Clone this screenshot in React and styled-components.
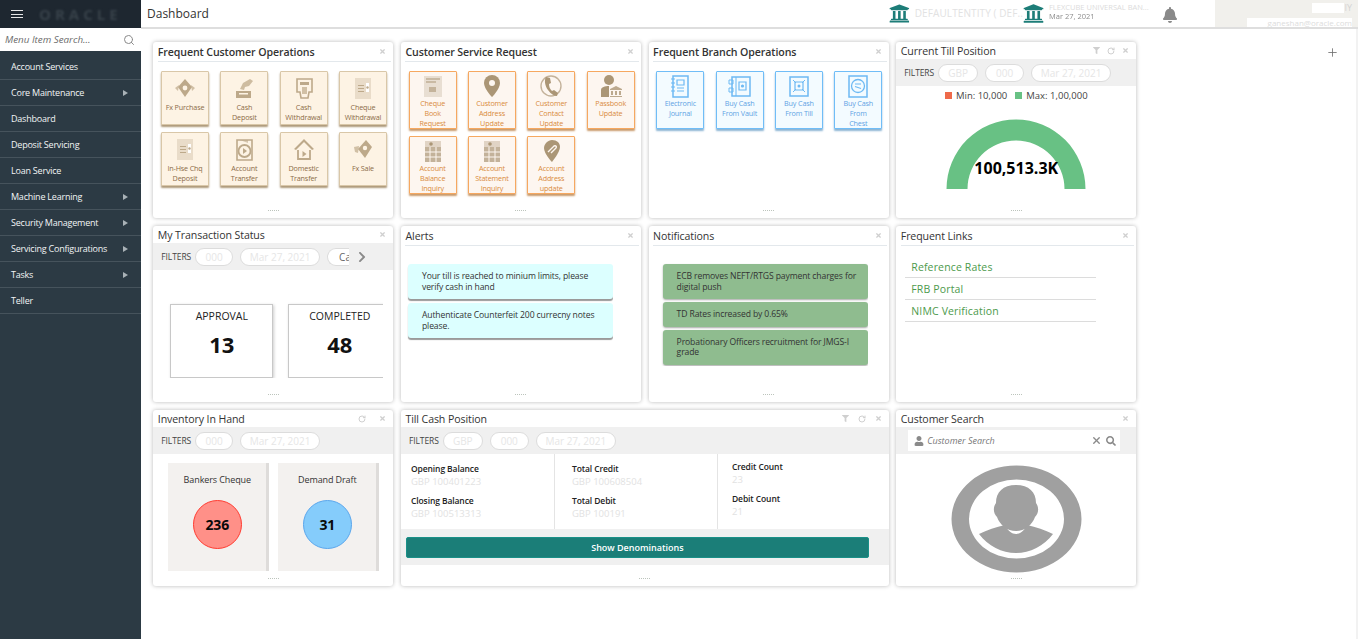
import React from "react";
import styled, { createGlobalStyle } from "styled-components";
import { FaBell, FaChevronRight, FaFilter, FaSearch, FaTimes, FaUniversity, FaUser } from "react-icons/fa";
import { RotateCw, Plus, Search, X } from "lucide-react";

const GlobalStyle = createGlobalStyle`
  html, body { margin: 0; padding: 0; height: 100%; background: #fff; }
  body { font-family: "Open Sans", "Noto Sans", sans-serif; color: #2b2b2b; overflow: hidden; }
  * { box-sizing: border-box; }
`;

const Page = styled.div`
  display: flex;
  width: 1358px;
  height: 639px;
  overflow: hidden;
`;

const Sidebar = styled.aside`
  width: 141px;
  flex: none;
  background: #2c3a44;
  display: flex;
  flex-direction: column;
`;

const Brand = styled.div`
  height: 28px;
  background: #1e2730;
  display: flex;
  align-items: center;
  padding-left: 11px;
  gap: 16px;
`;

const Burger = styled.span`
  width: 12px;
  height: 8px;
  border-top: 1px solid #e6e6e6;
  border-bottom: 1px solid #e6e6e6;
  position: relative;
  &::after {
    content: "";
    position: absolute;
    left: 0;
    right: 0;
    top: 2.5px;
    height: 1px;
    background: #e6e6e6;
  }
`;

const Logo = styled.span`
  font-size: 15px;
  font-weight: 700;
  letter-spacing: 4px;
  color: #38424a;
  filter: blur(0.8px);
`;

const MenuSearch = styled.div`
  height: 23px;
  background: #fff;
  display: flex;
  align-items: center;
  justify-content: space-between;
  padding: 0 6px 0 5px;
  font-size: 9.8px;
  font-style: italic;
  color: #6b6b6b;
`;

const Menu = styled.nav`
  display: flex;
  flex-direction: column;
  padding-top: 2px;
`;

const MenuItem = styled.div`
  height: 26px;
  display: flex;
  align-items: center;
  justify-content: space-between;
  padding: 0 13px 0 11px;
  border-bottom: 1px solid #46535c;
  font-size: 9px;
  letter-spacing: -0.22px;
  color: #f2f4f5;
  &:first-child { height: 27px; }
`;

const Arrow = styled.span`
  width: 0;
  height: 0;
  border-left: 5px solid #a9b1b6;
  border-top: 3.5px solid transparent;
  border-bottom: 3.5px solid transparent;
`;

const Content = styled.main`
  flex: 1;
  min-width: 0;
  display: flex;
  flex-direction: column;
`;

const Header = styled.header`
  height: 29px;
  flex: none;
  display: flex;
  align-items: stretch;
  border-bottom: 2px solid #dedede;
`;

const PageTitle = styled.div`
  width: 748px;
  padding: 5px 0 0 6px;
  font-size: 12px;
  color: #333;
`;

const Entity = styled.div`
  display: flex;
  align-items: center;
  gap: 5px;
  width: 134px;
  color: #1d7d78;
  font-size: 10px;
  white-space: nowrap;
`;

const EntityName = styled.span`
  color: #e2e2e2;
  letter-spacing: 0.1px;
  margin-top: -2px;
`;

const BranchLines = styled.div`
  display: flex;
  flex-direction: column;
  font-size: 7.5px;
  line-height: 9px;
  color: #dcdcdc;
  margin-top: -3px;
`;

const BranchDate = styled.span`
  color: #8d8d8d;
  filter: blur(0.4px);
`;

const BellBox = styled.div`
  width: 58px;
  padding: 6px 0 0 5px;
  color: #8a8a8a;
  font-size: 16px;
`;

const UserBox = styled.div`
  flex: 1;
  background: #f1f0ec;
  display: flex;
  flex-direction: column;
  align-items: flex-end;
  padding: 3px 6px 0 0;
`;

const UserTop = styled.div`
  display: flex;
  height: 10px;
  font-size: 9px;
  line-height: 10px;
  color: #d4d4d4;
`;

const UserName = styled.span`
  background: #fff;
  width: 32px;
`;

const UserMail = styled.span`
  background: #fff;
  margin-top: 5px;
  width: 105px;
  height: 9px;
  line-height: 9px;
  font-size: 8px;
  text-align: right;
  color: #dcdcdc;
  white-space: nowrap;
`;

const Board = styled.div`
  flex: 1;
  display: flex;
  align-items: flex-start;
  padding: 13px 0 0 12.3px;
  border-right: 2px solid #f2f2f2;
`;

const Grid = styled.div`
  display: grid;
  grid-template-columns: repeat(4, 240px);
  grid-auto-rows: 176px;
  gap: 8px 7.67px;
`;

const AddWidget = styled.div`
  margin: 4px 0 0 190px;
  color: #6d6d6d;
  line-height: 0;
`;

const Card = styled.section`
  background: #fff;
  border-radius: 3px;
  box-shadow: 0 0 4px rgba(0, 0, 0, 0.28);
  display: flex;
  flex-direction: column;
  overflow: hidden;
  min-width: 0;
  grid-column: span ${(p) => p.$span || 1};
`;

const CardHead = styled.div`
  flex: none;
  height: ${(p) => (p.$filtered ? "17px" : "20px")};
  margin: 0 2px 0 4.5px;
  display: flex;
  align-items: center;
  justify-content: space-between;
  border-bottom: ${(p) => (p.$filtered ? "none" : "1px solid #e3e8ec")};
`;

const CardTitle = styled.h2`
  margin: 0;
  font-size: 10.6px;
  font-weight: ${(p) => (p.$strong ? 600 : 400)};
  letter-spacing: -0.1px;
  color: #333;
  white-space: nowrap;
`;

const CardTools = styled.div`
  display: flex;
  align-items: center;
  gap: ${(p) => p.$gap || 7}px;
  padding-right: 5px;
  color: #cfcfcf;
  line-height: 0;
`;

const Handle = styled.div`
  flex: none;
  align-self: center;
  width: 11px;
  height: 1px;
  margin: auto 0 7px;
  border-top: 1px dotted #bcc4bc;
`;

const TileGrid = styled.div`
  display: grid;
  grid-template-columns: repeat(4, 48px);
  column-gap: 11.33px;
  row-gap: 7px;
  padding: 9px 0 0 7.7px;
`;

const tileColors = {
  tan: { border: "#d9c7a8", shadow: "#ad9878", bg: "#fdf3e4", text: "#8c6c48", icon: "#bda98a" },
  orange: { border: "#f6a860", shadow: "#c99a6b", bg: "#fdf6f0", text: "#d98b3c", icon: "#ab9676" },
  blue: { border: "#70bdf7", shadow: "#8bb4d3", bg: "#f3fbff", text: "#5fa3e4", icon: "#6db9f3" },
};

const Tile = styled.div`
  height: ${(p) => (p.$kind === "tan" ? "54px" : "58px")};
  border: 1px solid ${(p) => tileColors[p.$kind].border};
  background: ${(p) => tileColors[p.$kind].bg};
  box-shadow: 0 2px 2px ${(p) => tileColors[p.$kind].shadow};
  border-radius: 1px;
  display: flex;
  flex-direction: column;
  align-items: center;
  text-align: center;
  padding-top: ${(p) => (p.$kind === "tan" ? "4px" : "2px")};
  font-size: 7.2px;
  line-height: 10px;
  letter-spacing: -0.15px;
  white-space: pre-line;
  color: ${(p) => tileColors[p.$kind].text};
`;

const TileIcon = styled.svg`
  width: 24px;
  height: 24px;
  flex: none;
  margin-bottom: ${(p) => (p.$kind === "tan" ? "2px" : "0")};
  color: ${(p) => tileColors[p.$kind].icon};
`;

const FilterBar = styled.div`
  flex: none;
  height: 27px;
  background: #f0f0f0;
  display: flex;
  align-items: center;
  gap: 7px;
  padding-left: ${(p) => p.$left || "8px"};
  font-size: 8.5px;
  color: #444;
`;

const FilterLabel = styled.span`
  margin-right: -3px;
  letter-spacing: -0.1px;
`;

const Pill = styled.span`
  width: ${(p) => p.$w}px;
  height: 18px;
  flex: none;
  background: #fff;
  border: 1px solid #dcdcdc;
  border-radius: 9px;
  text-align: center;
  font-size: 10px;
  line-height: 16px;
  color: ${(p) => (p.$dark ? "#666" : "#e6e6e6")};
  overflow: hidden;
  white-space: nowrap;
`;

const ClippedPill = styled(Pill)`
  border-right: none;
  border-radius: 9px 0 0 9px;
  text-align: left;
  padding-left: 11px;
`;

const FilterNext = styled.span`
  color: #8a8a8a;
  font-size: 12px;
  line-height: 0;
`;

const Legend = styled.div`
  display: flex;
  justify-content: center;
  align-items: center;
  gap: 4px;
  padding-top: 3px;
  font-size: 9.5px;
  line-height: 13px;
  color: #444;
`;

const LegendMark = styled.span`
  width: 7px;
  height: 7px;
  background: ${(p) => p.$color};
  margin-left: ${(p) => (p.$spaced ? "4px" : "0")};
`;

const GaugeWrap = styled.div`
  position: relative;
  display: flex;
  justify-content: center;
  margin-top: 17px;
`;

const GaugeValue = styled.div`
  position: absolute;
  left: 0;
  right: 0;
  bottom: 10px;
  text-align: center;
  font-size: 16px;
  font-weight: 700;
  color: #000;
`;

const StatusRow = styled.div`
  display: flex;
  gap: 15px;
  width: 230px;
  padding: 34px 0 0 17px;
  overflow: hidden;
`;

const StatusBox = styled.div`
  width: 103px;
  height: 74px;
  flex: none;
  border: 1px solid #c8c8c8;
  box-shadow: 1px 1px 3px rgba(0, 0, 0, 0.2);
  text-align: center;
  padding-top: 4px;
  font-size: 10.5px;
  line-height: 14px;
  color: #222;
`;

const StatusCount = styled.div`
  margin-top: 7px;
  font-size: 22px;
  line-height: 28px;
  font-weight: 700;
  color: #111;
`;

const MessageList = styled.div`
  display: flex;
  flex-direction: column;
  gap: ${(p) => p.$gap}px;
  width: ${(p) => p.$left + 205}px;
  height: 120px;
  padding: 18px 0 0 ${(p) => p.$left}px;
  overflow: hidden;
`;

const Message = styled.div`
  flex: none;
  padding: 7px 10px 7px 14px;
  border-radius: 3px;
  font-size: 8.6px;
  line-height: 10.5px;
  letter-spacing: -0.12px;
  color: #333;
  background: ${(p) => (p.$green ? "#8fbc8f" : "#dcffff")};
  box-shadow: ${(p) => (p.$green ? "0 1px 2px #a9a9a9" : "0 2px 1px #9a9a9a")};
`;

const LinkList = styled.div`
  display: flex;
  flex-direction: column;
  width: 191px;
  margin: 10px 0 0 9px;
`;

const QuickLink = styled.a`
  height: 22px;
  padding: 5px 0 0 6px;
  font-size: 10.5px;
  font-weight: 500;
  line-height: 13px;
  letter-spacing: 0.15px;
  color: #4c9a4c;
  border-bottom: 1px solid #dcdcdc;
`;

const StockRow = styled.div`
  display: flex;
  gap: 9px;
  padding: 9px 0 0 15px;
`;

const StockCard = styled.div`
  width: 101px;
  height: 108px;
  background: #f3f1ef;
  border-right: 3px solid #dedcda;
  display: flex;
  flex-direction: column;
  align-items: center;
  padding-top: 10px;
  font-size: 9px;
  letter-spacing: -0.1px;
  line-height: 14px;
  color: #333;
`;

const StockCircle = styled.div`
  width: 49px;
  height: 49px;
  margin-top: 13px;
  border-radius: 50%;
  border: 1.5px solid ${(p) => (p.$blue ? "#5aa6ec" : "#ff3b30")};
  background: ${(p) => (p.$blue ? "#85ccfb" : "#ff9088")};
  display: flex;
  align-items: center;
  justify-content: center;
  font-size: 14px;
  font-weight: 700;
  color: #0a0a0a;
`;

const TillColumns = styled.div`
  flex: none;
  height: 75px;
  display: grid;
  grid-template-columns: 154px 163px 1fr;
`;

const TillColumn = styled.div`
  padding: ${(p) => p.$top}px 0 0 ${(p) => p.$left}px;
  border-right: ${(p) => (p.$divider ? "1px solid #e4e4e4" : "none")};
`;

const TillLabel = styled.div`
  font-size: 8.5px;
  font-weight: 600;
  letter-spacing: -0.1px;
  line-height: 12px;
  color: #222;
`;

const TillValue = styled.div`
  font-size: 9.5px;
  line-height: 13px;
  height: 20px;
  color: #e2e2e2;
`;

const ButtonBand = styled.div`
  flex: none;
  height: 36px;
  background: #f0f0f0;
  padding: 8px 0 0 5px;
`;

const DenomButton = styled.button`
  display: block;
  width: 463px;
  height: 21px;
  border: 1px solid #1a9088;
  border-radius: 2px;
  background: #1b7e78;
  color: #fff;
  font-family: inherit;
  font-size: 9px;
  font-weight: 600;
`;

const SearchBand = styled.div`
  flex: none;
  height: 27px;
  background: #f0f0f0;
  padding: 3px 16px 0 12px;
`;

const SearchField = styled.div`
  height: 21px;
  background: #fff;
  display: flex;
  align-items: center;
  gap: 3px;
  padding: 0 4px 0 6px;
  font-size: 9px;
  font-style: italic;
  color: #777;
`;

const SearchText = styled.span`
  flex: 1;
`;

const FieldIcon = styled.span`
  color: #8a8a8a;
  line-height: 0;
  margin-left: ${(p) => (p.$gap ? "1px" : "0")};
`;

const AvatarWrap = styled.div`
  display: flex;
  justify-content: center;
  padding-top: 11px;
  line-height: 0;
`;

// tile drawings, all on a 24 box in currentColor
const drawings = {
  fxBuy: (
    <>
      <path d="M12 3l7 8-7 10-7-10z" fill="currentColor" />
      <circle cx="12" cy="12" r="2.4" fill="#fdf3e4" />
      <path d="M18 9l4 3-3 3zM6 9l-4 3 3 3z" fill="currentColor" opacity=".7" />
    </>
  ),
  deposit: (
    <>
      <path d="M4 15h15v7H4z" fill="currentColor" />
      <path d="M7 17h9v1.4H7z" fill="#fdf3e4" />
      <path d="M8 13l3-6 7-4 3 2-4 5-4 1-1 3z" fill="currentColor" opacity=".75" />
    </>
  ),
  atm: (
    <>
      <path d="M5 3h15v13h-3l-1 6H9l-1-6H5z" fill="none" stroke="currentColor" strokeWidth="1.6" />
      <path d="M8 6h9v3H8z" fill="currentColor" />
      <path d="M10 11h5v7h-5z" fill="currentColor" opacity=".7" />
    </>
  ),
  cheque: (
    <>
      <path d="M4 2h16v21H4z" fill="currentColor" opacity=".3" />
      <path d="M7 9h6v1H7zM7 12h6v1H7zM7 15h6v1H7z" fill="currentColor" />
      <path d="M15 7h3v9h-3z" fill="#fff" />
      <circle cx="16.5" cy="11.5" r="1.2" fill="currentColor" />
    </>
  ),
  account: (
    <>
      <path d="M5 3h15v20H5z" fill="none" stroke="currentColor" strokeWidth="1.6" />
      <circle cx="12.5" cy="14" r="6" fill="none" stroke="currentColor" strokeWidth="1.8" />
      <path d="M11 11l4 3-4 3z" fill="currentColor" />
      <path d="M8 3l8 3V3z" fill="currentColor" opacity=".6" />
    </>
  ),
  house: (
    <>
      <path d="M12 2L2 12l2 1 8-8 8 8 2-1z" fill="currentColor" />
      <path d="M6 13v9h12v-9" fill="none" stroke="currentColor" strokeWidth="1.8" />
      <path d="M10.5 14l4 3-4 3z" fill="currentColor" />
    </>
  ),
  fxSell: (
    <>
      <path d="M15 3l6 7-7 11-7-9z" fill="currentColor" />
      <circle cx="14" cy="11" r="2.2" fill="#fdf3e4" />
      <path d="M8 9l-5 1 1 5 3 1z" fill="currentColor" opacity=".7" />
    </>
  ),
  book: (
    <>
      <path d="M3 2h18v21H3z" fill="currentColor" opacity=".25" />
      <path d="M5 5h14M5 8h10" stroke="currentColor" strokeWidth="1" />
      <path d="M8 13h7v5H8z" fill="currentColor" opacity=".6" />
    </>
  ),
  pin: (
    <>
      <path d="M12 1a8 8 0 0 1 8 8c0 6-8 14-8 14S4 15 4 9a8 8 0 0 1 8-8z" fill="currentColor" />
      <circle cx="12" cy="9" r="3" fill="#fdf6f0" />
    </>
  ),
  phone: (
    <>
      <circle cx="12" cy="12" r="10" fill="none" stroke="currentColor" strokeWidth="1.4" opacity=".7" />
      <path d="M7 3c-2 3-1 9 2 13s6 6 9 6l1-3-4-3-2 1c-2-2-3-4-3-7l2-1-1-5z" fill="currentColor" />
    </>
  ),
  passbook: (
    <>
      <circle cx="10" cy="6" r="5" fill="currentColor" />
      <path d="M2 23v-7c0-3 4-4 8-4v11z" fill="currentColor" />
      <path d="M11 15l6-3 6 3v1H11zM12 17h2v4h-2zM16 17h2v4h-2zM20 17h2v4h-2zM11 22h12v1H11z" fill="currentColor" opacity=".8" />
    </>
  ),
  sheet: (
    <>
      <path d="M4 2h16v21H4z" fill="currentColor" opacity=".35" />
      <path d="M4 8h16v15H4z" fill="currentColor" opacity=".55" />
      <path d="M4 13h16M4 18h16M9 8v15M15 8v15" stroke="#fdf6f0" strokeWidth="1" />
      <circle cx="10" cy="5" r="1.8" fill="currentColor" />
    </>
  ),
  clip: (
    <>
      <path d="M13 1c5 0 8 3 8 7 0 5-8 15-8 15S5 15 5 9c0-4 4-8 8-8z" fill="currentColor" />
      <path d="M9 13l6-6c2-1 3 1 2 2l-5 5" fill="none" stroke="#fdf6f0" strokeWidth="1.4" />
    </>
  ),
  journal: (
    <>
      <path d="M5 2h15v21H5z" fill="none" stroke="currentColor" strokeWidth="1.5" />
      <path d="M3 5h4M3 9h4M3 13h4M3 17h4" stroke="currentColor" strokeWidth="1.2" />
      <path d="M9 6h7v5H9z" fill="none" stroke="currentColor" strokeWidth="1.2" />
      <path d="M9 14h7M9 17h7" stroke="currentColor" strokeWidth="1.2" />
    </>
  ),
  vault: (
    <>
      <path d="M4 3h18v19H4z" fill="none" stroke="currentColor" strokeWidth="1.5" />
      <path d="M8 3v19" stroke="currentColor" strokeWidth="1" />
      <path d="M1 6h4v4H1zM1 14h4v4H1z" fill="none" stroke="currentColor" strokeWidth="1" />
      <path d="M11 8h7v8h-7z" fill="none" stroke="currentColor" strokeWidth="1.2" />
      <circle cx="14.5" cy="12" r="1.6" fill="currentColor" />
    </>
  ),
  till: (
    <>
      <path d="M3 3h18v19H3z" fill="none" stroke="currentColor" strokeWidth="1.5" />
      <path d="M8 8h8v8H8z" fill="none" stroke="currentColor" strokeWidth="1.2" />
      <path d="M6 6l3 3M18 6l-3 3M6 18l3-3M18 18l-3-3" stroke="currentColor" strokeWidth="1" />
      <circle cx="12" cy="12" r="1.5" fill="currentColor" />
    </>
  ),
  chest: (
    <>
      <path d="M3 2h18v21H3z" fill="none" stroke="currentColor" strokeWidth="1.5" />
      <circle cx="12" cy="12" r="6.5" fill="none" stroke="currentColor" strokeWidth="1.3" />
      <path d="M9 10h6M9 12.5l6 2" stroke="currentColor" strokeWidth="1.1" />
    </>
  ),
};

const customerOps = [
  ["fxBuy", "Fx Purchase"],
  ["deposit", "Cash\nDeposit"],
  ["atm", "Cash\nWithdrawal"],
  ["cheque", "Cheque\nWithdrawal"],
  ["cheque", "In-Hse Chq\nDeposit"],
  ["account", "Account\nTransfer"],
  ["house", "Domestic\nTransfer"],
  ["fxSell", "Fx Sale"],
];

const serviceRequests = [
  ["book", "Cheque\nBook\nRequest"],
  ["pin", "Customer\nAddress\nUpdate"],
  ["phone", "Customer\nContact\nUpdate"],
  ["passbook", "Passbook\nUpdate"],
  ["sheet", "Account\nBalance\nInquiry"],
  ["sheet", "Account\nStatement\nInquiry"],
  ["clip", "Account\nAddress\nupdate"],
];

const branchOps = [
  ["journal", "Electronic\nJournal"],
  ["vault", "Buy Cash\nFrom Vault"],
  ["till", "Buy Cash\nFrom Till"],
  ["chest", "Buy Cash\nFrom\nChest"],
];

const menuItems = [
  ["Account Services", false],
  ["Core Maintenance", true],
  ["Dashboard", false],
  ["Deposit Servicing", false],
  ["Loan Service", false],
  ["Machine Learning", true],
  ["Security Management", true],
  ["Servicing Configurations", true],
  ["Tasks", true],
  ["Teller", false],
];

const Tiles = ({ items, kind }) => (
  <TileGrid>
    {items.map(([icon, label]) => (
      <Tile key={label} $kind={kind}>
        <TileIcon $kind={kind} viewBox="0 0 24 24">
          {drawings[icon]}
        </TileIcon>
        {label}
      </Tile>
    ))}
  </TileGrid>
);

const Head = ({ title, strong, filtered, filter, refresh, toolGap }) => (
  <CardHead $filtered={filtered}>
    <CardTitle $strong={strong}>{title}</CardTitle>
    <CardTools $gap={toolGap}>
      {filter && <FaFilter size={7} />}
      {refresh && <RotateCw size={8} strokeWidth={3} />}
      <FaTimes size={7} />
    </CardTools>
  </CardHead>
);

const Filters = ({ pills, left }) => (
  <FilterBar $left={left}>
    <FilterLabel>FILTERS</FilterLabel>
    {pills.map(([text, w]) => (
      <Pill key={text} $w={w}>
        {text}
      </Pill>
    ))}
  </FilterBar>
);

const Gauge = () => (
  <GaugeWrap>
    <svg width="140" height="70" viewBox="0 0 140 70">
      <path d="M0.5 70a69.5 69.5 0 0 1 139 0h-21a48.5 48.5 0 0 0-97 0z" fill="#68c184" />
    </svg>
    <GaugeValue>100,513.3K</GaugeValue>
  </GaugeWrap>
);

const Avatar = () => (
  <svg width="131" height="108" viewBox="0 0 131 108">
    <path
      fillRule="evenodd"
      d="M.5 54a65 53.500 0 1 0 130 0a65 53.500 0 1 0-130 0zM18 54a47.500 39.500 0 1 0 95 0a47.500 39.500 0 1 0-95 0z"
      fill="#a0a0a0"
    />
    <path
      d="M65 20c13 0 20 7 20 18 3 4 3 10-1 14-3 8-10 14-19 14s-16-6-19-14c-4-4-4-10-1-14 0-11 7-18 20-18z"
      fill="#a0a0a0"
    />
    <path
      d="M28 69c8-4 17-7 26-9 3 6 7 9 11 9s8-3 11-9c9 2 18 5 26 9-9 12-23 19-37 19s-28-7-37-19z"
      fill="#a0a0a0"
    />
  </svg>
);

const App = () => (
  <Page>
    <GlobalStyle />
    <Sidebar>
      <Brand>
        <Burger />
        <Logo>ORACLE</Logo>
      </Brand>
      <MenuSearch>
        Menu Item Search...
        <Search size={12} color="#8a8a8a" />
      </MenuSearch>
      <Menu>
        {menuItems.map(([label, more]) => (
          <MenuItem key={label}>
            {label}
            {more && <Arrow />}
          </MenuItem>
        ))}
      </Menu>
    </Sidebar>

    <Content>
      <Header>
        <PageTitle>Dashboard</PageTitle>
        <Entity>
          <FaUniversity size={21} />
          <EntityName>DEFAULTENTITY ( DEF..</EntityName>
        </Entity>
        <Entity>
          <FaUniversity size={21} />
          <BranchLines>
            <span>FLEXCUBE UNIVERSAL BAN...</span>
            <BranchDate>Mar 27, 2021</BranchDate>
          </BranchLines>
        </Entity>
        <BellBox>
          <FaBell />
        </BellBox>
        <UserBox>
          <UserTop>
            <UserName />
            IY
          </UserTop>
          <UserMail>ganeshan@oracle.com</UserMail>
        </UserBox>
      </Header>

      <Board>
        <Grid>
          <Card>
            <Head title="Frequent Customer Operations" strong />
            <Tiles items={customerOps} kind="tan" />
            <Handle />
          </Card>
          <Card>
            <Head title="Customer Service Request" strong />
            <Tiles items={serviceRequests} kind="orange" />
            <Handle />
          </Card>
          <Card>
            <Head title="Frequent Branch Operations" strong />
            <Tiles items={branchOps} kind="blue" />
            <Handle />
          </Card>
          <Card>
            <Head title="Current Till Position" filtered filter refresh />
            <Filters
              pills={[
                ["GBP", 40],
                ["000", 39],
                ["Mar 27, 2021", 80],
              ]}
            />
            <Legend>
              <LegendMark $color="#ee6a4a" />
              Min: 10,000
              <LegendMark $color="#68c184" $spaced />
              Max: 1,00,000
            </Legend>
            <Gauge />
            <Handle />
          </Card>

          <Card>
            <Head title="My Transaction Status" filtered />
            <FilterBar>
              <FilterLabel>FILTERS</FilterLabel>
              <Pill $w={38}>000</Pill>
              <Pill $w={80}>Mar 27, 2021</Pill>
              <ClippedPill $w={22} $dark>
                Ca
              </ClippedPill>
              <FilterNext>
                <FaChevronRight />
              </FilterNext>
            </FilterBar>
            <StatusRow>
              <StatusBox>
                APPROVAL
                <StatusCount>13</StatusCount>
              </StatusBox>
              <StatusBox>
                COMPLETED
                <StatusCount>48</StatusCount>
              </StatusBox>
            </StatusRow>
            <Handle />
          </Card>
          <Card>
            <Head title="Alerts" />
            <MessageList $left={7} $gap={4}>
              <Message>Your till is reached to minium limits, please verify cash in hand</Message>
              <Message>Authenticate Counterfeit 200 currecny notes please.</Message>
            </MessageList>
            <Handle />
          </Card>
          <Card>
            <Head title="Notifications" />
            <MessageList $left={14} $gap={3}>
              <Message $green>ECB removes NEFT/RTGS payment charges for digital push</Message>
              <Message $green>TD Rates increased by 0.65%</Message>
              <Message $green>Probationary Officers recruitment for JMGS-I grade</Message>
            </MessageList>
            <Handle />
          </Card>
          <Card>
            <Head title="Frequent Links" />
            <LinkList>
              <QuickLink>Reference Rates</QuickLink>
              <QuickLink>FRB Portal</QuickLink>
              <QuickLink>NIMC Verification</QuickLink>
            </LinkList>
            <Handle />
          </Card>

          <Card>
            <Head title="Inventory In Hand" filtered refresh toolGap={13} />
            <Filters
              pills={[
                ["000", 38],
                ["Mar 27, 2021", 80],
              ]}
            />
            <StockRow>
              <StockCard>
                Bankers Cheque
                <StockCircle>236</StockCircle>
              </StockCard>
              <StockCard>
                Demand Draft
                <StockCircle $blue>31</StockCircle>
              </StockCard>
            </StockRow>
            <Handle />
          </Card>
          <Card $span={2}>
            <Head title="Till Cash Position" filtered filter refresh toolGap={9} />
            <Filters
              pills={[
                ["GBP", 40],
                ["000", 39],
                ["Mar 27, 2021", 80],
              ]}
            />
            <TillColumns>
              <TillColumn $top={9} $left={10} $divider>
                <TillLabel>Opening Balance</TillLabel>
                <TillValue>GBP 100401223</TillValue>
                <TillLabel>Closing Balance</TillLabel>
                <TillValue>GBP 100513313</TillValue>
              </TillColumn>
              <TillColumn $top={9} $left={17} $divider>
                <TillLabel>Total Credit</TillLabel>
                <TillValue>GBP 100608504</TillValue>
                <TillLabel>Total Debit</TillLabel>
                <TillValue>GBP 100191</TillValue>
              </TillColumn>
              <TillColumn $top={7} $left={14}>
                <TillLabel>Credit Count</TillLabel>
                <TillValue>23</TillValue>
                <TillLabel>Debit Count</TillLabel>
                <TillValue>21</TillValue>
              </TillColumn>
            </TillColumns>
            <ButtonBand>
              <DenomButton>Show Denominations</DenomButton>
            </ButtonBand>
            <Handle />
          </Card>
          <Card>
            <Head title="Customer Search" filtered />
            <SearchBand>
              <SearchField>
                <FieldIcon>
                  <FaUser size={10} />
                </FieldIcon>
                <SearchText>Customer Search</SearchText>
                <FieldIcon>
                  <X size={11} strokeWidth={3} />
                </FieldIcon>
                <FieldIcon $gap>
                  <FaSearch size={10} />
                </FieldIcon>
              </SearchField>
            </SearchBand>
            <AvatarWrap>
              <Avatar />
            </AvatarWrap>
            <Handle />
          </Card>
        </Grid>
        <AddWidget>
          <Plus size={13} strokeWidth={1.5} />
        </AddWidget>
      </Board>
    </Content>
  </Page>
);

export default App;
